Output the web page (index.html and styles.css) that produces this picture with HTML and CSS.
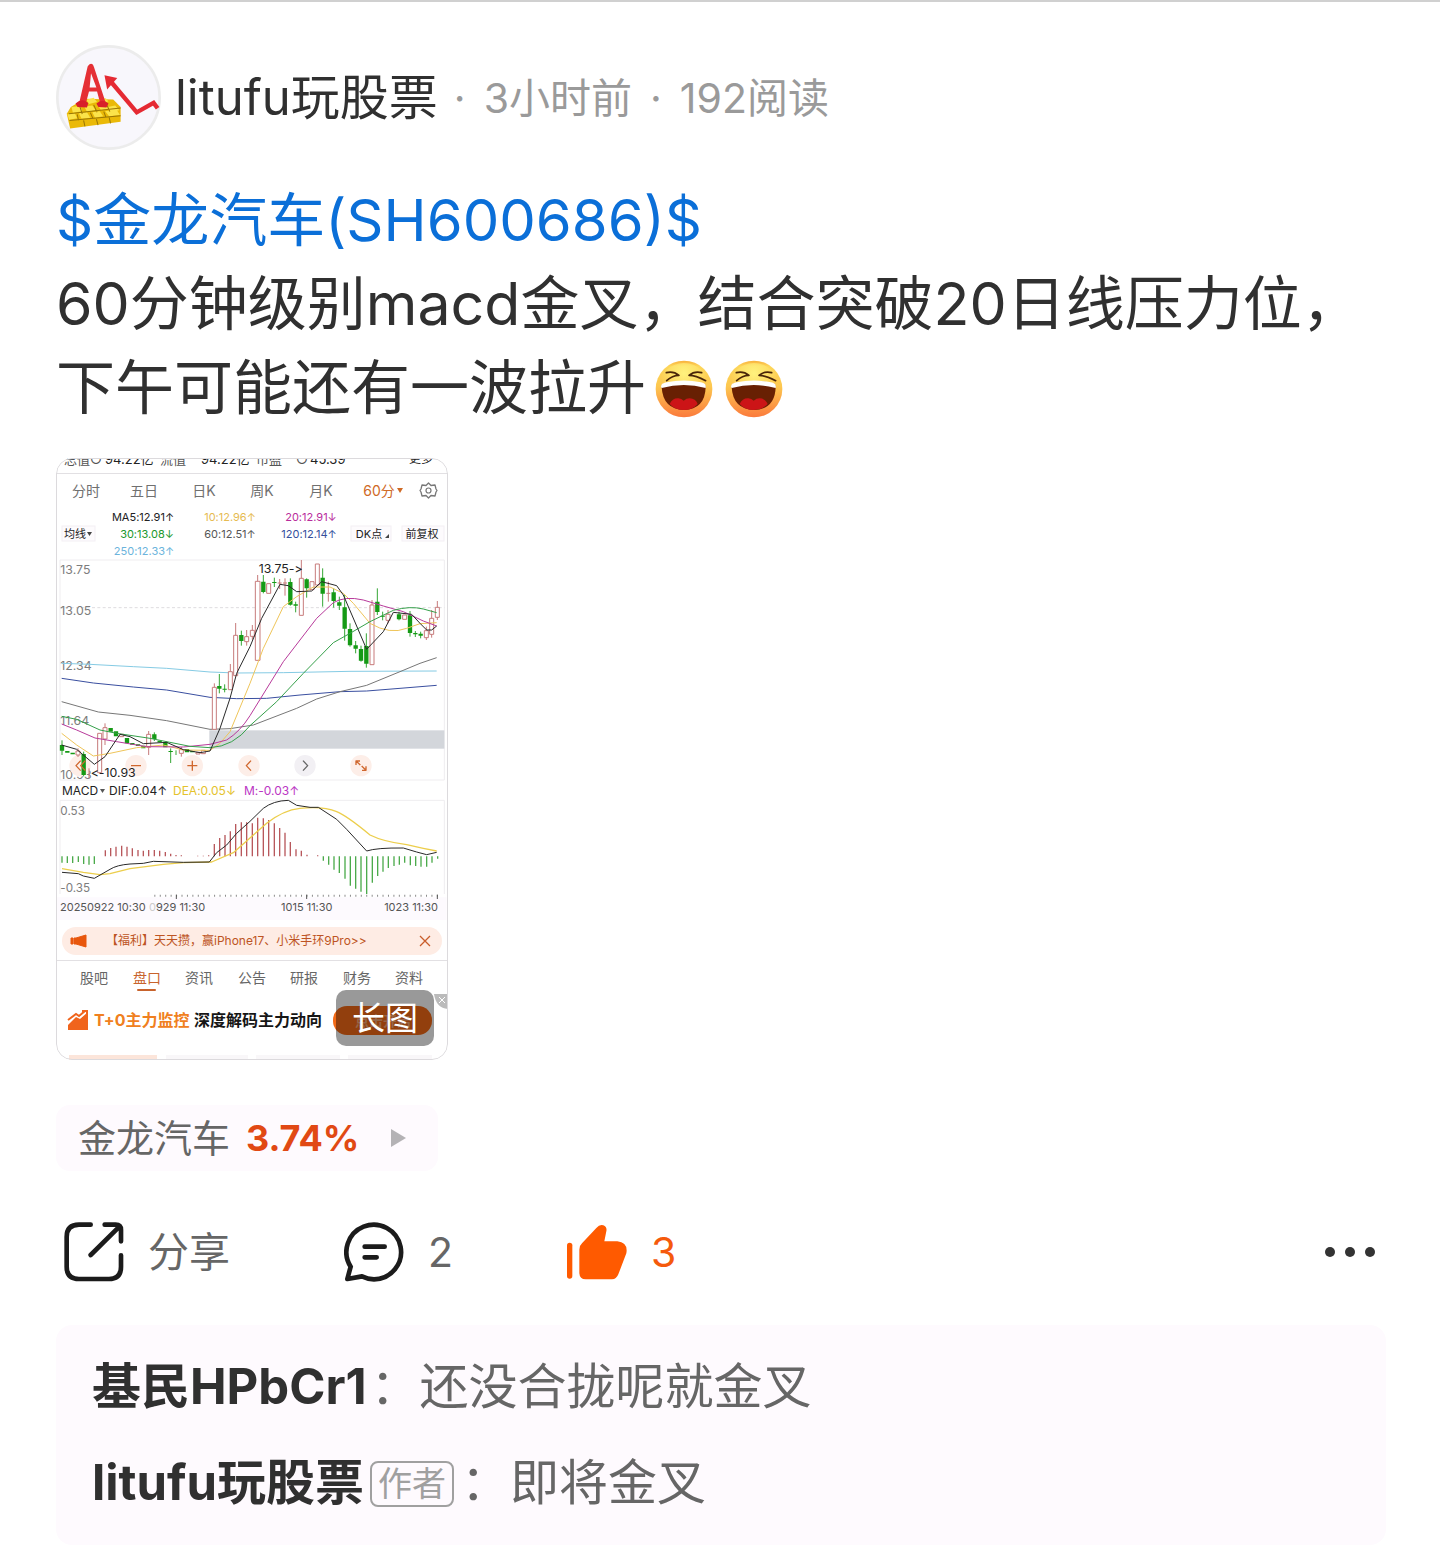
FILE: index.html
```html
<!DOCTYPE html>
<html lang="zh-CN">
<head>
<meta charset="utf-8">
<meta name="viewport" content="width=device-width, initial-scale=1">
<title>litufu玩股票</title>
<link rel="stylesheet" href="styles.css">
</head>
<body>
<svg class="defs" aria-hidden="true">
  <defs>
    <linearGradient id="face" x1="0" y1="0" x2="0" y2="1">
      <stop offset="0" stop-color="#f9b13c"/><stop offset=".1" stop-color="#fdd65a"/><stop offset=".45" stop-color="#fdc850"/><stop offset="1" stop-color="#fb7a3c"/>
    </linearGradient>
    <radialGradient id="shine" cx=".5" cy=".2" r=".45">
      <stop offset="0" stop-color="#fff27e"/><stop offset="1" stop-color="#fff27e" stop-opacity="0"/>
    </radialGradient>
    <symbol id="laugh" viewBox="0 0 174 174">
      <circle cx="87" cy="87" r="85" fill="url(#face)"/>
      <circle cx="87" cy="87" r="78" fill="url(#shine)"/>
      <path d="M34 38Q55 32 72 46Q52 46 35 62M140 38Q119 32 102 46Q122 46 152 62" fill="none" stroke="#4a2608" stroke-width="5" stroke-linecap="round" stroke-linejoin="round"/>
      <path d="M20 82Q18 70 34 69Q87 58 138 69Q154 70 152 82Q150 148 87 150Q24 148 20 82Z" fill="#682003"/>
      <path d="M18 80Q18 70 34 67Q87 56 138 67Q156 70 152 84Q87 66 20 84Z" fill="#fff"/>
      <path d="M44 132Q52 114 70 115Q80 116 86 122Q94 115 104 115Q122 116 128 132Q112 150 87 150Q60 150 44 132Z" fill="#cc1417"/>
    </symbol>
  </defs>
</svg>

<article class="post">
  <header class="post-head">
    <svg class="avatar" viewBox="0 0 312 312" role="img" aria-label="头像">
      <circle cx="156" cy="156" r="152" fill="#f8f7fc" stroke="#ececec" stroke-width="8"/>
      <path d="M32 204L44 184L84 160L170 162L192 184L192 228L42 248Z" fill="#eab908"/>
      <path d="M46 184l26-3 6 16-28 4zM84 183l24-3 10 14-26 4zM124 180l24-4 12 12-26 6zM154 184l22-4 12 14-24 4zM34 206l22-3 7 15-24 4zM68 203l24-3 10 16-26 3zM108 200l22-3 10 15-24 4zM146 197l34-5 10 16-32 4zM90 163l22-6 10 12-24 6zM126 160l22-2 8 10-22 4z" fill="#fbe34a"/>
      <path d="M38 204L192 187M40 224L192 210M70 180L78 205M112 178L122 200M152 180L160 198M63 206l4 18M102 201l8 18M142 198l6 16M82 224l4 18M120 220l5 18M158 215l4 18" stroke="#9a7605" stroke-width="3"/>
      <path d="M94 64Q98 56 104 56Q110 56 113 66L148 172L132 175L122 138H98L88 176H68ZM104 84L100 126H120Z" fill="#e53035" fill-rule="evenodd"/>
      <path d="M58 174q20-18 38-2l-4 14-28-2zM120 174q18-16 36 0l-6 12-24-2z" fill="#d8202a"/>
      <path d="M164 110L240 200L290 172L302 188" fill="none" stroke="#e52a33" stroke-width="13"/>
      <path d="M144 90L182 98L152 132Z" fill="#e52a33"/>
    </svg>
    <span class="author">litufu玩股票</span>
    <span class="meta"><span>·</span><span>3小时前</span><span>·</span><span>192阅读</span></span>
  </header>

  <div class="post-body">
    <a class="stock-link" href="#">$金龙汽车(SH600686)$</a>
    <p class="text">60分钟级别macd金叉，结合突破20日线压力位，下午可能还有一波拉升<svg class="emoji" role="img" aria-label="大笑"><use href="#laugh"/></svg><svg class="emoji" role="img" aria-label="大笑"><use href="#laugh"/></svg></p>
  </div>

  <a class="thumb" href="#" aria-label="长图">
    <svg class="shot" viewBox="56 458 392 602">
      <g font-size="13" fill="#555">
        <text x="64" y="464">总值○</text><text x="105" y="464" fill="#222">94.22亿</text><text x="160" y="464">流值</text><text x="201" y="464" fill="#222">94.22亿</text><text x="256" y="464">市盈</text><text x="296" y="464">○</text><text x="310" y="464" fill="#222">45.39</text><text x="409" y="463" font-size="12" fill="#222">更多</text>
      </g>
      <path d="M56 473.500H448M56 960.500H448" stroke="#e2e0e3" fill="none"/>
      <g font-size="14" fill="#707070" text-anchor="middle">
        <text x="86" y="496">分时</text><text x="144" y="496">五日</text><text x="204" y="496">日K</text><text x="262" y="496">周K</text><text x="321" y="496">月K</text><text x="379" y="496" fill="#cf6a26">60分</text>
      </g>
      <path d="M397 488h6l-3 5z" fill="#cf6a26"/>
      <path d="M428.500 483l2.500 2.500 4-.500 1 4 1 1.500-1 1.500-1 4-4-.500-2.500 2.500-2.500-2.500-4 .500-1-4-1-1.500 1-1.500 1-4 4 .500z" fill="none" stroke="#777" stroke-width="1.300" stroke-linejoin="round"/>
      <circle cx="428.500" cy="490.500" r="2.500" fill="none" stroke="#777" stroke-width="1.200"/>
      <g fill="#fdfbfd" stroke="#f3eff4"><rect x="62" y="526" width="33" height="15"/><rect x="351" y="526" width="40" height="15"/><rect x="402" y="526" width="42" height="15"/></g>
      <g font-size="11" fill="#222" text-anchor="middle">
        <text x="75" y="538">均线</text><text x="369" y="538">DK点</text><text x="422" y="538">前复权</text>
        <text x="143" y="521">MA5:12.91↑</text><text x="230" y="521" fill="#e6bb52">10:12.96↑</text><text x="311" y="521" fill="#b92b9c">20:12.91↓</text>
        <text x="147" y="538" fill="#20982c">30:13.08↓</text><text x="230" y="538" fill="#555">60:12.51↑</text><text x="309" y="538" fill="#34509c">120:12.14↑</text>
        <text x="144" y="555" fill="#6bb4dc">250:12.33↑</text>
      </g>
      <path d="M87 532h5l-2.500 4zM389 534v4h-4z" fill="#444"/>

      <svg x="50" y="555" width="400" height="230" viewBox="0 0 1200 690" fill="none" stroke-width="3" stroke-linejoin="round">
        <path d="M30 15H1183V675H30Z" stroke="#efedf0"/>
        <path d="M30 158H1183" stroke="#dedcdf" stroke-dasharray="9 7"/>
        <rect x="478" y="526" width="705" height="55" fill="#d3d6db"/>
        <g font-size="37" fill="#7d7d7d"><text x="31" y="57">13.75</text><text x="31" y="181">13.05</text><text x="31" y="345">12.34</text><text x="31" y="509">11.64</text><text x="31" y="672">10.93</text></g>
        <g fill="#fdeee8"><circle cx="90" cy="632" r="32"/><circle cx="258" cy="632" r="32"/><circle cx="427" cy="632" r="32"/><circle cx="597" cy="632" r="32"/><circle cx="933" cy="632" r="32"/><circle cx="765" cy="632" r="32" fill="#f2f0f4"/></g>
        <path d="M35 325L120 328L250 335L350 340L480 351L560 354L700 353L900 349L1160 348" stroke="#85cbe4"/>
        <path d="M35 370L130 384L250 396L350 405L480 427L560 431L650 430L750 420L870 410L950 408L1050 400L1160 391" stroke="#3a4fa0"/>
        <path d="M35 440L145 471L240 481L350 497L480 523L540 521L610 510L740 460L800 432L870 410L950 391L1050 350L1110 325L1160 308" stroke="#777"/>
        <g stroke="#c77b7b">
          <path d="M84 580V606M165 505V570M296 528V600M394 576V605M493 385V397M541 327V350M557 204V241M590 225V272M607 210V254M623 60V79M689 72V102M683 84H695M705 70V122M699 84H711M754 15V70M835 80V140M829 115H841M966 135V150M1014 165V205M1129 215V255M1145 165V248M1162 138V195M117 640V670"/>
          <path fill="#fff" d="M78 588h12v12h-12zM143 535h12v118h-12zM159 518h12v34h-12zM209 538h12v7h-12zM290 538h12v39h-12zM388 584h12v11h-12zM438 592h12v5h-12zM454 586h12v10h-12zM487 397h12v126h-12zM535 350h12v54h-12zM551 241h12v121h-12zM584 245h12v15h-12zM601 226h12v18h-12zM616 79h14v237h-14zM650 86h12v29h-12zM748 70h12v111h-12zM780 80h12v24h-12zM796 27h12v63h-12zM960 150h12v179h-12zM1008 178h12v18h-12zM1058 180h12v13h-12zM1123 227h12v21h-12zM1139 190h12v48h-12zM1156 157h12v30h-12z"/>
        </g>
        <path d="M36 556V600M101 590V664M313 532V558M362 580V624M378 586V600M508 357V415M524 388V412M574 227V272M640 60V115M673 68V96M721 70V152M737 140V172M770 70V128M818 40V155M851 100V158M868 125V165M884 120V257M900 205V275M917 258V295M933 272V320M949 235V338M982 100V180M998 170V196M1047 170V196M1080 168V245M1096 228V246M1112 230V250" stroke="#35a735"/>
        <path d="M36 570V587M52 588V593M68 593V598M101 597V660M182 519V530M198 529V544M231 549V565M247 564V569M264 568V573M280 572V580M313 538V552M329 557V562M346 561V577M362 588V591M411 582V592M427 588V592M508 393V401M524 401V404M574 240V258M640 80V111M673 81V84M721 81V149M737 148V152M770 73V100M818 68V116M851 112V138M868 142V152M884 157V221M900 222V271M917 271V281M933 282V317M949 273V326M982 140V171M998 182V185M1047 178V193M1080 181V234M1096 234V238M1112 236V242" stroke="#159a15" stroke-width="13"/>
        <path d="M35 535L80 570L130 603L180 595L260 578L340 570L400 585L480 586L510 565L540 530L600 385L640 280L700 155L740 125L790 96L840 96L880 115L910 145L960 205Q1020 240 1070 220L1110 206L1160 203" stroke="#efc55a"/>
        <path d="M35 507L80 525L135 549L200 560L290 575L400 576L480 568L530 555Q570 530 600 482L700 320L800 190L850 143Q885 122 940 135L1000 153L1060 170L1120 198L1160 213" stroke="#b83a9b"/>
        <path d="M35 484L80 493L150 525L200 535L300 550L420 574L480 578Q550 575 600 512L680 440L760 355L850 263L900 235L960 200L1030 166Q1080 152 1120 162L1160 173" stroke="#35a04a"/>
        <path d="M35 570L80 583L133 628L165 605L210 538L240 545L280 566L350 562L400 584L450 593L480 588L510 520L540 430L560 355L600 275L635 190L690 88L715 92L740 110L785 108L815 80L860 92L880 120L950 283L1000 230L1030 172L1085 178L1110 205L1130 225L1145 225L1160 213" stroke="#292929"/>
        <g stroke="#d0672e" stroke-width="4"><path d="M92 617L78 632L92 647M106 617L92 632L106 647M243 632H273M412 632H442M427 617V647M603 617L589 632L603 647M931 630L918 618M918 630V618H930M935 633L948 646M948 634V646H936"/><path d="M759 617L773 632L759 647" stroke="#666"/></g>
        <g font-size="37" fill="#222"><text x="626" y="55">13.75-&gt;</text><text x="122" y="666">&lt;-10.93</text></g>
      </svg>

      <g font-size="12"><text x="62" y="795" fill="#222">MACD</text><text x="109" y="795" fill="#222">DIF:0.04↑</text><text x="173" y="795" fill="#e4c22c">DEA:0.05↓</text><text x="244" y="795" fill="#bb36c4">M:-0.03↑</text></g>
      <path d="M100 789h5l-2.500 4z" fill="#555"/>

      <svg x="50" y="780" width="400" height="140" viewBox="0 0 1200 420" fill="none" stroke-width="3" stroke-linejoin="round">
        <path d="M22 352H1190V420H22Z" fill="#fdfafe"/>
        <path d="M30 342V61H1183V342" stroke="#efedf0"/>
        <g font-size="35" fill="#7d7d7d"><text x="31" y="104">0.53</text><text x="31" y="337">-0.35</text></g>
        <path d="M36 229V248M52 229V249M68 229V249M85 229V246M101 229V252M117 229V254M133 229V252M820 229V242M836 229V254M852 229V269M868 229V279M885 229V296M901 229V317M917 229V326M933 229V335M950 229V342M967 229V308M983 229V288M999 229V275M1015 229V264M1032 229V258M1048 229V254M1064 229V248M1081 229V256M1097 229V258M1113 229V260M1130 229V260M1146 229V248M1163 229V236" stroke="#4cab4c" stroke-width="4"/>
        <path d="M166 229V211M182 229V204M198 229V200M215 229V197M231 229V200M247 229V205M264 229V210M280 229V212M296 229V210M313 229V210M329 229V212M346 229V216M362 229V221M378 229V225M394 229V226M443 229V227M460 229V227M476 229V226M493 229V192M509 229V174M525 229V165M541 229V154M557 229V132M574 229V127M590 229V127M607 229V130M623 229V113M640 229V115M656 229V120M673 229V130M689 229V144M705 229V158M721 229V186M738 229V208M754 229V212M771 229V224M803 229V226" stroke="#b8585c" stroke-width="4"/>
        <path d="M36 266L100 277L150 284L180 281L240 266L340 253L400 248L485 246L550 218L600 174L650 130Q700 90 750 85Q820 78 860 95Q890 107 960 165Q1000 185 1070 194L1120 205L1160 213" stroke="#ecce4c" stroke-width="4"/>
        <path d="M36 277L85 281L100 288L133 295L180 268Q200 255 240 252L280 250L310 244L400 247L478 246L500 218L530 195L560 160L600 124L640 85Q670 62 715 61L740 76L780 82L805 82L860 118L890 148L950 213Q980 203 1060 204L1100 216L1130 224L1160 217" stroke="#292929"/>
        <path d="M313 347H1165" stroke="#8b8b8b" stroke-width="6" stroke-dasharray="3 13.300"/>
        <path d="M379 344V357M770 344V357M1162 344V357" stroke="#555"/>
      </svg>
      <g font-size="11" fill="#555"><text x="60" y="911">20250922 10:30</text><text x="149" y="911"><tspan fill="#ccc">0</tspan>929 11:30</text><text x="281" y="911">1015 11:30</text><text x="438" y="911" text-anchor="end">1023 11:30</text></g>

      <rect x="62" y="927" width="380" height="28" rx="14" fill="#feece4"/>
      <path d="M86 935v12l-10-3h-2v-6h2zM71 938h2v6h-2z" fill="#e8570c" stroke="#e8570c" stroke-linejoin="round"/>
      <text x="106" y="945" font-size="12" fill="#bd5423">【福利】天天攒，赢iPhone17、小米手环9Pro&gt;&gt;</text>
      <path d="M420 936l10 10M430 936l-10 10" stroke="#c95d2b" stroke-width="1.300"/>
      <g font-size="14" fill="#666" text-anchor="middle"><text x="94" y="983">股吧</text><text x="147" y="983" fill="#c8632c">盘口</text><text x="199" y="983">资讯</text><text x="252" y="983">公告</text><text x="304" y="983">研报</text><text x="357" y="983">财务</text><text x="409" y="983">资料</text></g>
      <rect x="137" y="989" width="19" height="2" rx="1" fill="#c8632c"/>
      <path d="M68 1025l8-8 4 2 8-7v18h-20z" fill="#f0641c"/><path d="M68 1020l8-6 3 2 6-5M82 1011h5v5" fill="none" stroke="#f0641c" stroke-width="2"/>
      <g font-size="16" font-weight="700"><text x="94" y="1026" fill="#f08020">T+0主力监控</text><text x="194" y="1026" fill="#161616">深度解码主力动向</text></g>
      <rect x="333" y="1006" width="99" height="29" rx="14" fill="#f36a16"/>
      <text x="383" y="1026" font-size="14" font-weight="700" fill="#f9a878" text-anchor="middle">点击开启</text>
      <path d="M434 994H448V1009Q436 1008 434 994Z" fill="#bbb"/><path d="M439 997l6 6M445 997l-6 6" stroke="#fff"/>
      <path d="M69 1060v-5h88v5z" fill="#fce5da"/><path d="M166 1060v-5h82v5zM256 1060v-5h84v5zM348 1060v-5h84v5z" fill="#f9f7f9"/>
    </svg>
    <span class="badge">长图</span>
  </a>

  <a class="quote" href="#"><span>金龙汽车</span><strong>3.74%</strong><svg class="play" viewBox="0 0 15 18" aria-hidden="true"><path d="M0 0L15 9L0 18Z" fill="#b4b2b5"/></svg></a>

  <div class="actions">
    <button type="button" class="action">
      <svg viewBox="0 0 180 180" fill="none" stroke="#1b1b1b" stroke-width="14" stroke-linecap="round" stroke-linejoin="round" aria-hidden="true"><path d="M80 8H45Q8 8 8 45V134Q8 171 45 171H135Q171 171 171 134V100M122 8H155Q171 8 171 24V58M80 99L166 14"/></svg>
      <span>分享</span>
    </button>
    <button type="button" class="action" aria-label="评论 2">
      <svg viewBox="0 0 180 180" fill="none" stroke="#1b1b1b" stroke-width="14" stroke-linecap="round" stroke-linejoin="round" aria-hidden="true"><path d="M20 134A82 82 0 1 1 90 172Q70 171 54 163L10 171L20 134M62 74H122M62 106H98"/></svg>
      <span>2</span>
    </button>
    <button type="button" class="action liked" aria-label="赞 3">
      <svg viewBox="0 0 180 180" fill="#ff5a00" aria-hidden="true"><rect x="0" y="62" width="16" height="108" rx="8"/><path d="M37 154V83Q37 71 45 64L88 18Q98 6 109 10Q121 15 118 28L112 58H151Q184 62 178 94L154 157Q148 172 135 172H56Q38 172 37 154Z"/></svg>
      <span>3</span>
    </button>
    <button type="button" class="more" aria-label="更多">
      <svg viewBox="0 0 50 10" fill="#333" aria-hidden="true"><circle cx="5" cy="5" r="5"/><circle cx="25" cy="5" r="5"/><circle cx="45" cy="5" r="5"/></svg>
    </button>
  </div>

  <section class="comments">
    <p class="comment"><b>基民HPbCr1</b>：还没合拢呢就金叉</p>
    <p class="comment"><b>litufu玩股票</b><span class="tag">作者</span>：即将金叉</p>
  </section>
</article>
</body>
</html>
```
FILE: styles.css
```css
* {
  box-sizing: border-box;
}

body {
  margin: 0;
  background: #fff;
  color: #303030;
  font-family: Inter, "Noto Sans CJK SC", sans-serif;
}

a {
  color: inherit;
  text-decoration: none;
}

p {
  margin: 0;
}

button {
  margin: 0;
  padding: 0;
  border: 0;
  background: none;
  color: inherit;
  font: inherit;
}

.defs {
  position: absolute;
  width: 0;
  height: 0;
}

.post {
  display: flex;
  flex-direction: column;
  align-items: flex-start;
  padding: 43px 54px 14px 56px;
  border-top: 2px solid #d0d0d0;
}

.post-head {
  display: flex;
  align-items: center;
  gap: 14px;
}

.avatar {
  width: 105px;
  height: 105px;
}

.author {
  font-size: 49px;
  line-height: 60px;
}

.meta {
  display: flex;
  gap: 18px;
  margin-left: 2px;
  color: #9a9a9a;
  font-size: 41px;
  line-height: 60px;
}

.post-body {
  margin-top: 28px;
  font-size: 59px;
  line-height: 84px;
}

.stock-link {
  display: block;
  color: #0b6fd8;
  font-size: 58px;
}

.emoji {
  width: 58px;
  height: 58px;
  margin: 0 3px 0 9px;
  vertical-align: -9px;
}

.thumb {
  position: relative;
  width: 392px;
  margin-top: 28px;
  border-radius: 16px;
  overflow: hidden;
}

.thumb::after {
  content: "";
  position: absolute;
  inset: 0;
  border: 1px solid #dcdadd;
  border-radius: 16px;
}

.shot {
  display: block;
  width: 100%;
  font-feature-settings: "calt" 0;
}

.badge {
  position: absolute;
  right: 14px;
  bottom: 14px;
  width: 98px;
  border-radius: 10px;
  background: rgba(0, 0, 0, 0.4);
  color: #fff;
  font-size: 33px;
  line-height: 56px;
  text-align: center;
}

.quote {
  display: flex;
  align-items: center;
  gap: 16px;
  margin-top: 45px;
  padding: 0 32px 0 22px;
  border-radius: 14px;
  background: #fefafe;
  color: #666;
  font-size: 38px;
  line-height: 66px;
}

.quote strong {
  color: #e14914;
  font-size: 36px;
}

.play {
  width: 15px;
  height: 18px;
  margin-left: 16px;
}

.actions {
  display: flex;
  align-items: center;
  align-self: stretch;
  gap: 114px;
  margin-top: 51px;
  padding: 0 11px 0 8px;
  color: #666;
  font-size: 41px;
  line-height: 60px;
}

.action {
  display: flex;
  align-items: center;
  gap: 24px;
}

.action svg {
  width: 60px;
  height: 60px;
}

.liked {
  color: #f55a0c;
}

.more {
  display: flex;
  margin-left: auto;
}

.more svg {
  width: 50px;
  height: 10px;
}

.comments {
  align-self: stretch;
  margin-top: 43px;
  padding: 14px 36px;
  border-radius: 16px;
  background: #fefafe;
  color: #666;
  font-size: 49px;
  line-height: 96px;
}

.comment b {
  margin-right: 4px;
  color: #303030;
}

.tag {
  display: inline-block;
  margin: 0 7px 0 2px;
  padding: 0 6px;
  border: 2px solid #a0a0a0;
  border-radius: 8px;
  color: #a0a0a0;
  font-size: 34px;
  line-height: 42px;
  vertical-align: 4px;
}
```
